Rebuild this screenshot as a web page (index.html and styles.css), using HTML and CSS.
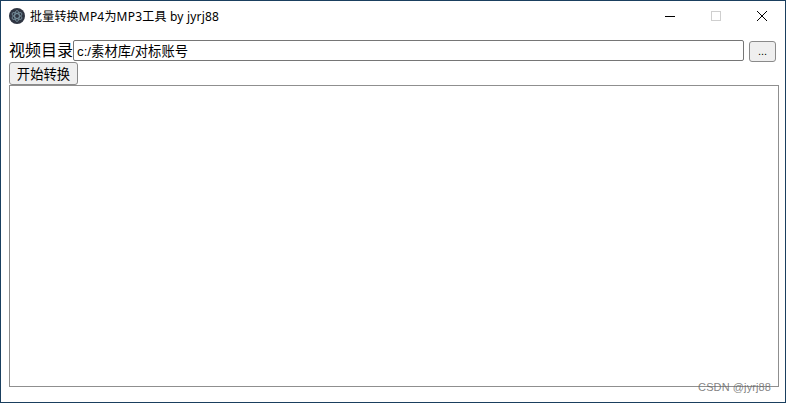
FILE: index.html
```html
<!DOCTYPE html>
<html lang="zh">
<head>
<meta charset="utf-8">
<title>批量转换MP4为MP3工具 by jyrj88</title>
<link rel="stylesheet" href="styles.css">
</head>
<body>
<div class="window">
  <header class="titlebar">
    <svg class="app-icon" width="16" height="16" viewBox="0 0 16 16">
      <circle cx="8" cy="8" r="8" fill="#2f3542"/>
      <g fill="none" stroke="#7f9aa6" stroke-width="0.8">
        <ellipse cx="8" cy="8" rx="5.5" ry="2.3" transform="rotate(30 8 8)"/>
        <ellipse cx="8" cy="8" rx="5.5" ry="2.3" transform="rotate(90 8 8)"/>
        <ellipse cx="8" cy="8" rx="5.5" ry="2.3" transform="rotate(150 8 8)"/>
      </g>
    </svg>
    <span class="title">批量转换MP4为MP3工具 by jyrj88</span>
    <div class="controls">
      <div class="ctrl">
        <svg width="12" height="12" viewBox="0 0 12 12"><path d="M1 6.5H11" stroke="#000" stroke-width="1"/></svg>
      </div>
      <div class="ctrl">
        <svg width="12" height="12" viewBox="0 0 12 12"><rect x="1.5" y="1.5" width="9" height="9" fill="none" stroke="#cfcfcf"/></svg>
      </div>
      <div class="ctrl">
        <svg width="12" height="12" viewBox="0 0 12 12"><path d="M1 1L11 11M11 1L1 11" stroke="#000" stroke-width="1"/></svg>
      </div>
    </div>
  </header>
  <main class="content">
    <div class="dir-row">
      <label class="dir-label" for="dir">视频目录</label>
      <input class="dir-input" id="dir" type="text" value="c:/素材库/对标账号">
      <button class="btn browse">...</button>
    </div>
    <div class="start-row"><button class="btn start">开始转换</button></div>
    <textarea class="log"></textarea>
  </main>
  <div class="watermark">CSDN @jyrj88</div>
</div>
</body>
</html>
```
FILE: styles.css
```css
* { box-sizing: border-box; }
html, body { margin: 0; padding: 0; }
body {
  width: 786px;
  height: 403px;
  overflow: hidden;
  background: #fff;
  font-family: "Liberation Sans", "Noto Sans CJK SC", sans-serif;
}
.window {
  position: relative;
  width: 786px;
  height: 403px;
  border: 1px solid #1a3f5f;
  display: flex;
  flex-direction: column;
  background: #fff;
}
.titlebar {
  height: 29px;
  flex: none;
  display: flex;
  align-items: center;
  padding-left: 8px;
}
.app-icon { flex: none; }
.title {
  margin-left: 5px;
  font-size: 12px;
  letter-spacing: 0.2px;
  color: #000;
  font-family: "Noto Sans", "Noto Sans CJK SC", sans-serif;
}
.controls {
  margin-left: auto;
  display: flex;
}
.ctrl {
  width: 46px;
  height: 29px;
  display: flex;
  align-items: center;
  justify-content: center;
}
.content {
  flex: 1;
  display: flex;
  flex-direction: column;
  padding: 9px 6px 15px 8px;
  min-height: 0;
}
.dir-row {
  display: flex;
  align-items: flex-start;
  height: 23px;
  flex: none;
}
.dir-label {
  font-size: 16px;
  line-height: 23px;
  width: 64px;
  flex: none;
  color: #000;
  white-space: nowrap;
}
.dir-input {
  width: 671px;
  height: 21px;
  margin-top: 1px;
  flex: none;
  border: 1px solid #767676;
  border-radius: 2px;
  padding: 1px 3px;
  font-size: 13.33px;
  font-family: "Liberation Sans", "Noto Sans CJK SC", sans-serif;
  color: #000;
  background: #fff;
  outline: none;
}
.btn {
  border: 1px solid #8a8a8a;
  border-radius: 3px;
  background: #efefef;
  font-size: 13.33px;
  font-family: "Liberation Sans", "Noto Sans CJK SC", sans-serif;
  color: #000;
  padding: 1px 6px;
}
.browse {
  width: 27px;
  height: 21px;
  margin: 2px 0 0 5px;
  flex: none;
  font-size: 11px;
  padding: 0;
  line-height: 19px;
}
.start-row {
  display: flex;
  height: 23px;
  flex: none;
}
.start {
  width: 69px;
  height: 23px;
}
.log {
  display: block;
  flex: none;
  width: 770px;
  height: 302px;
  border: 1px solid #8f8f8f;
  background: #fff;
  resize: none;
  outline: none;
  margin: 0;
  padding: 2px;
}
.watermark {
  position: absolute;
  right: 14px;
  bottom: 8px;
  font-size: 11px;
  letter-spacing: 0.1px;
  line-height: 13px;
  color: rgba(100, 100, 100, 0.8);
  font-family: "Liberation Sans", sans-serif;
}
```
